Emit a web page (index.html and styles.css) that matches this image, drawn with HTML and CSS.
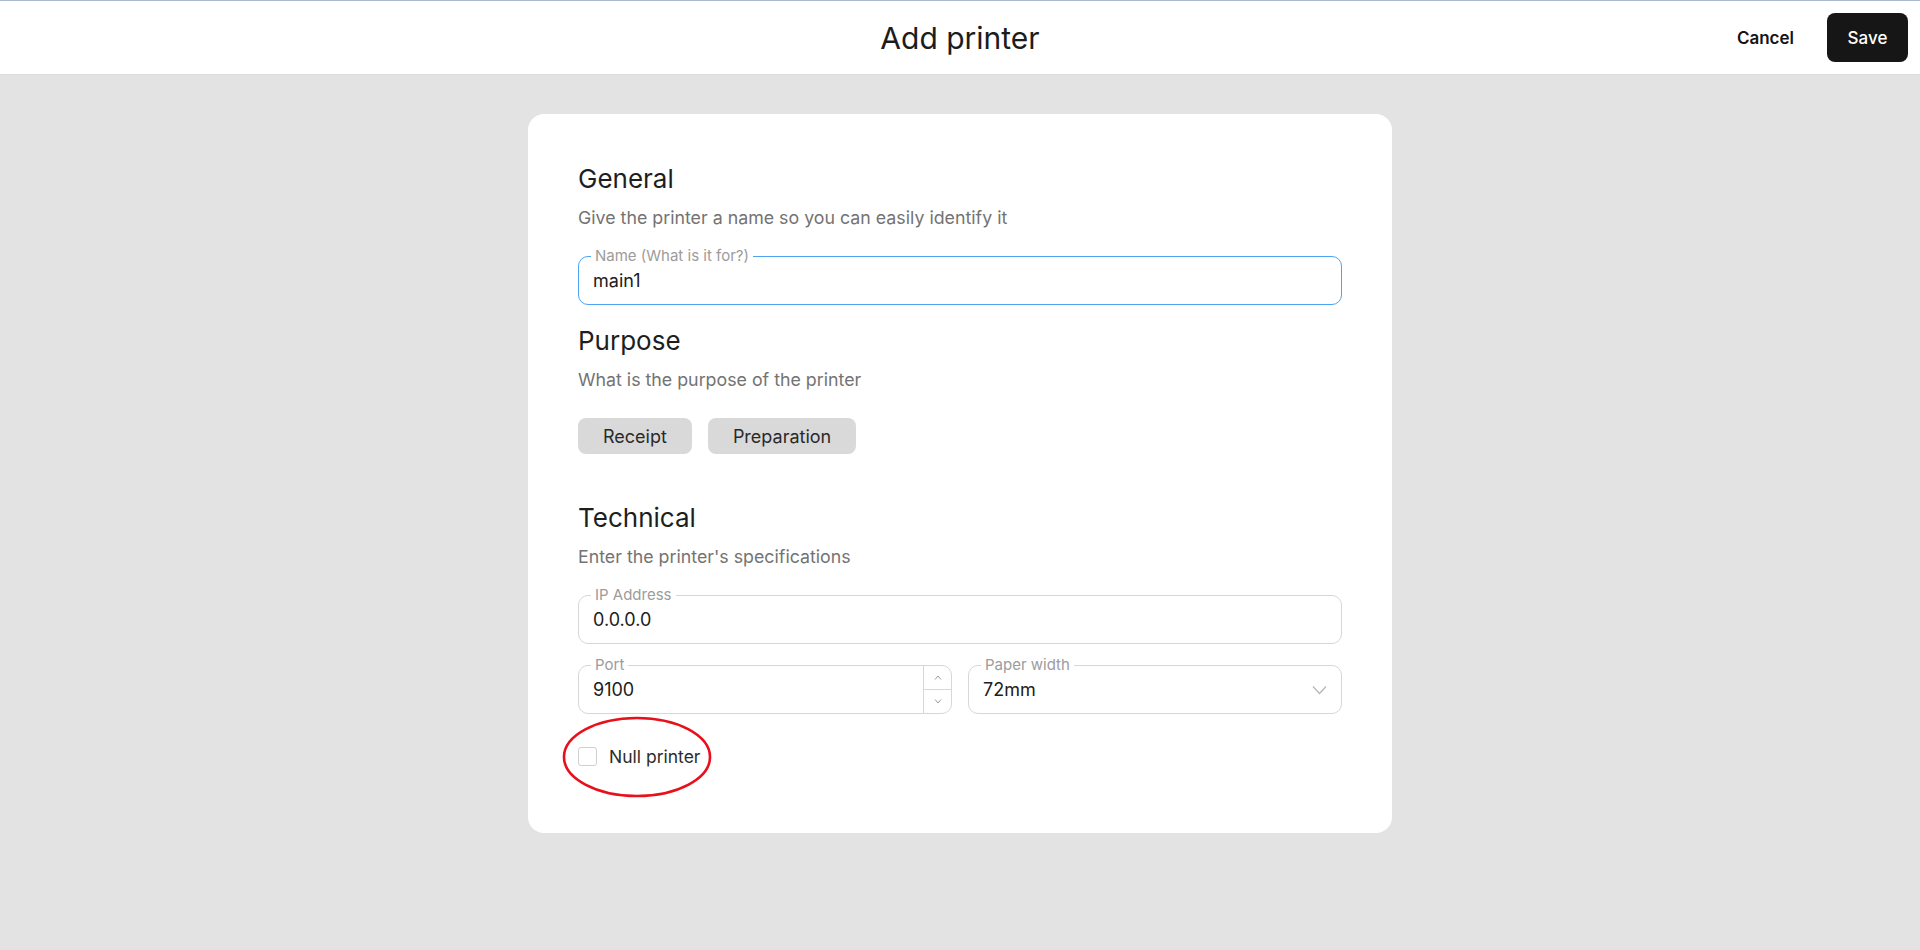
FILE: index.html
```html
<!DOCTYPE html>
<html lang="en">
<head>
<meta charset="utf-8">
<title>Add printer</title>
<link rel="stylesheet" href="styles.css">
</head>
<body>
<header class="topbar">
  <div class="topbar-side"></div>
  <h1 class="topbar-title">Add printer</h1>
  <div class="topbar-actions">
    <button class="btn-cancel" type="button">Cancel</button>
    <button class="btn-save" type="button">Save</button>
  </div>
</header>

<main class="page">
  <section class="card">
    <h2 class="section-title">General</h2>
    <p class="section-desc">Give the printer a name so you can easily identify it</p>
    <div class="field field-focused field-first">
      <span class="field-label">Name (What is it for?)</span>
      <span class="field-value">main1</span>
    </div>

    <h2 class="section-title section-next">Purpose</h2>
    <p class="section-desc">What is the purpose of the printer</p>
    <div class="chips">
      <button class="chip" type="button">Receipt</button>
      <button class="chip" type="button">Preparation</button>
    </div>

    <h2 class="section-title section-after-chips">Technical</h2>
    <p class="section-desc">Enter the printer's specifications</p>
    <div class="field field-first">
      <span class="field-label">IP Address</span>
      <span class="field-value">0.0.0.0</span>
    </div>
    <div class="field-row">
      <div class="field field-number">
        <span class="field-label">Port</span>
        <span class="field-value">9100</span>
        <div class="spinner">
          <span class="spin-btn">
            <svg width="8" height="5" viewBox="0 0 8 5"><path d="M1 4.5 L4 1 L7 4.5" fill="none" stroke="#9a9a9a" stroke-width="1"/></svg>
          </span>
          <span class="spin-btn">
            <svg width="8" height="5" viewBox="0 0 8 5"><path d="M1 0.5 L4 4 L7 0.5" fill="none" stroke="#9a9a9a" stroke-width="1"/></svg>
          </span>
        </div>
      </div>
      <div class="field field-select">
        <span class="field-label">Paper width</span>
        <span class="field-value">72mm</span>
        <svg class="chevron" width="15" height="10" viewBox="0 0 15 10"><path d="M1 1.5 L7.5 8.5 L14 1.5" fill="none" stroke="#b5b5b5" stroke-width="1.2"/></svg>
      </div>
    </div>

    <label class="check-row">
      <span class="checkbox"></span>
      <span class="check-label">Null printer</span>
      <svg class="annotation" width="150" height="82" viewBox="0 0 150 82"><ellipse cx="75" cy="41" rx="73" ry="39" fill="none" stroke="#e8101a" stroke-width="2.6"/></svg>
    </label>
  </section>
</main>
</body>
</html>
```

FILE: styles.css
```css
* { box-sizing: border-box; }

html, body {
  margin: 0;
  padding: 0;
}

body {
  background: #e3e3e3;
  font-family: Inter, "Noto Sans", "Liberation Sans", sans-serif;
  color: #1e1e1e;
  min-height: 950px;
}

.topbar {
  height: 75px;
  background: #ffffff;
  border-top: 1px solid #a9b7cf;
  border-bottom: 1px solid #dcdcdc;
  display: grid;
  grid-template-columns: 1fr auto 1fr;
  align-items: center;
}

.topbar-title {
  margin: 0;
  font-size: 30px;
  font-weight: 400;
  color: #1c1c1c;
}

.topbar-actions {
  display: flex;
  justify-content: flex-end;
  align-items: center;
  gap: 17px;
  padding-right: 12px;
}

.btn-cancel {
  border: 0;
  background: transparent;
  font-family: inherit;
  font-size: 17px;
  font-weight: 600;
  color: #141414;
  padding: 0 16px;
  height: 49px;
  cursor: pointer;
}

.btn-save {
  border: 0;
  background: #161616;
  color: #ffffff;
  font-family: inherit;
  font-size: 17px;
  font-weight: 500;
  width: 81px;
  height: 49px;
  border-radius: 8px;
  cursor: pointer;
}

.page {
  padding-top: 39px;
  display: flex;
  justify-content: center;
}

.card {
  width: 864px;
  background: #ffffff;
  border-radius: 16px;
  padding: 49px 50px 67px;
}

.section-title {
  margin: 0;
  font-size: 26px;
  line-height: 32px;
  font-weight: 400;
  color: #1e1e1e;
}

.section-next { margin-top: 20px; }
.section-after-chips { margin-top: 48px; }

.section-desc {
  margin: 11px 0 0;
  font-size: 17.8px;
  line-height: 24px;
  color: #737373;
}

.field {
  position: relative;
  height: 49px;
  border: 1px solid #d7d7d7;
  border-radius: 10px;
  display: flex;
  align-items: center;
  padding: 0 14px;
}

.field-first { margin-top: 26px; }

.field-focused { border-color: #4ca4f3; }

.field-label {
  position: absolute;
  left: 12px;
  top: -10px;
  padding: 0 4px;
  background: #ffffff;
  font-size: 15px;
  line-height: 18px;
  color: #9c9c9c;
}

.field-value {
  font-size: 18px;
  color: #202020;
}

.field-row {
  margin-top: 21px;
  display: grid;
  grid-template-columns: 1fr 1fr;
  gap: 16px;
}

.field-number { padding-right: 0; }

.spinner {
  margin-left: auto;
  align-self: stretch;
  width: 28px;
  border-left: 1px solid #d7d7d7;
  display: flex;
  flex-direction: column;
}

.spin-btn {
  flex: 1;
  display: flex;
  align-items: center;
  justify-content: center;
}

.spin-btn + .spin-btn { border-top: 1px solid #d7d7d7; }

.field-select { justify-content: space-between; padding-right: 14px; }

.chips {
  margin-top: 26px;
  display: flex;
  gap: 16px;
}

.chip {
  height: 36px;
  border: 0;
  border-radius: 8px;
  background: #d9d9d9;
  font-family: inherit;
  font-size: 18px;
  color: #2a2a2a;
  padding: 0 25px;
}

.check-row {
  position: relative;
  margin-top: 33px;
  display: flex;
  align-items: center;
  gap: 12px;
  height: 19px;
}

.checkbox {
  width: 19px;
  height: 19px;
  border: 1px solid #cfcfcf;
  border-radius: 3px;
  background: #fff;
}

.check-label {
  font-size: 17.5px;
  color: #2c2c2c;
}

.annotation {
  position: absolute;
  left: -16px;
  top: -31px;
  pointer-events: none;
}
```
